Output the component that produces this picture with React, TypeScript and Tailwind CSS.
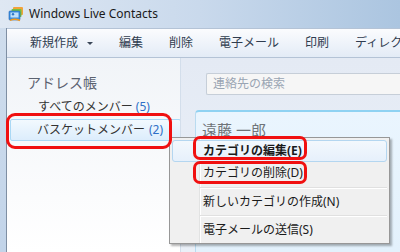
import React from "react";

function AppIcon() {
  return (
    <svg width="16" height="16" viewBox="0 0 16 16" className="shrink-0">
      <rect x="5" y="1" width="10" height="8" rx="1" fill="#f2a23a" />
      <rect x="3.5" y="3" width="10" height="8" rx="1" fill="#74c043" />
      <rect x="1" y="5" width="11" height="9" rx="1" fill="#3a8fe0" stroke="#2467b5" strokeWidth="0.6" />
      <rect x="2.5" y="6.5" width="8" height="5" fill="#bfe0fb" />
      <circle cx="5" cy="8.3" r="1.2" fill="#2d77c9" />
      <path d="M2 14.5 Q6.5 12 12 14.5" stroke="#f39a1e" strokeWidth="1.4" fill="none" />
    </svg>
  );
}

const toolbarItems = ["編集", "削除", "電子メール", "印刷", "ディレクトリ"];

export default function App() {
  return (
    <div className="relative h-[252px] w-[400px] overflow-hidden bg-[#c9d9ec] font-[family-name:'Noto_Sans','Noto_Sans_CJK_JP',sans-serif] text-[12px] leading-none">
      {/* title bar */}
      <div className="flex h-[28px] items-center gap-[5px] bg-gradient-to-r from-[#dfe8f3] via-[#c9d9ec] to-[#abc5e0] pl-[8px]">
        <AppIcon />
        <span className="text-[12px] text-[#1a1a1a]">Windows Live Contacts</span>
      </div>

      <div className="flex h-[224px]">
        <div className="w-[7px] shrink-0 border-r border-[#7f8fa3] bg-gradient-to-b from-[#cfdded] to-[#c2d4e9]" />

        <div className="flex min-w-0 flex-1 flex-col">
          {/* toolbar */}
          <div className="flex h-[30px] shrink-0 items-center gap-[26px] whitespace-nowrap border-y border-[#b4c3d6] bg-gradient-to-b from-[#fbfcfe] to-[#e3ebf6] pl-[23px] text-[12px] text-[#2f3c4f]">
            <div className="flex items-center gap-[9px]">
              <span>新規作成</span>
              <span className="h-0 w-0 border-x-[3px] border-t-[3px] border-x-transparent border-t-[#3a4658]" />
            </div>
            {toolbarItems.map((t) => (
              <span key={t}>{t}</span>
            ))}
          </div>

          <div className="flex min-h-0 flex-1">
            {/* left pane */}
            <div className="flex w-[173px] shrink-0 flex-col bg-gradient-to-b from-[#f1f4f8] to-white">
              <div className="pl-[20px] pt-[17px] text-[14px] leading-[16px] text-[#5b6270]">アドレス帳</div>
              <div className="mt-[9px] pl-[31px] leading-[14px] text-[#333]">
                すべてのメンバー <span className="text-[#2f6fc7]">(5)</span>
              </div>
              <div className="ml-[3px] mr-[-1px] mt-[5px] flex h-[22px] items-center rounded-[2px] border border-[#a9d8f5] bg-gradient-to-b from-[#f2f9fe] to-[#dcedfc] pl-[26px] text-[#333]">
                バスケットメンバー <span className="ml-[4px] text-[#2f6fc7]">(2)</span>
              </div>
            </div>

            {/* right area */}
            <div className="flex min-w-0 flex-1 flex-col border-l border-[#d3deeb] bg-gradient-to-b from-[#e4eaf4] to-[#eaf0f8]">
              <div className="ml-[25px] mt-[15px] flex h-[22px] items-center rounded-l-[2px] border border-r-0 border-[#c6ced8] bg-[#f6f6f6] pl-[6px] text-[#9aa5b3]">
                連絡先の検索
              </div>
              <div className="ml-[14px] mt-[15px] flex-1 rounded-tl-[4px] border-l border-t-2 border-l-[#b9dbf0] border-t-[#8fd2f2] bg-gradient-to-b from-[#eaf5fe] to-[#e3f1fc] pl-[6px] pt-[9px]">
                <div className="text-[15px] leading-[18px] text-[#6f7479]">遠藤 一郎</div>
              </div>
            </div>
          </div>
        </div>
      </div>

      {/* context menu */}
      <div className="absolute left-[169px] top-[137px] w-[221px] border border-[#979797] bg-[#f0f0f0] p-[2px] text-[12px] text-[#1a1a1a] shadow-[2px_2px_2px_rgba(0,0,0,0.3)]">
        <div className="absolute bottom-0 left-[29px] top-0 w-[2px] border-l border-[#e2e3e3] bg-white" />
        <div className="relative flex h-[22px] items-center rounded-[3px] border border-[#b4d6f0] bg-gradient-to-b from-[#f3f8fd] to-[#e6f0fb] pl-[30px] font-bold">
          カテゴリの編集(E)
        </div>
        <div className="relative flex h-[22px] items-center pl-[31px]">カテゴリの削除(D)</div>
        <div className="relative flex h-[7px] items-center pl-[28px]">
          <div className="h-[2px] w-full border-t border-[#e0e0e0] bg-white" />
        </div>
        <div className="relative flex h-[22px] items-center pl-[31px]">新しいカテゴリの作成(N)</div>
        <div className="relative flex h-[6px] items-center pl-[28px]">
          <div className="h-[2px] w-full border-t border-[#e0e0e0] bg-white" />
        </div>
        <div className="relative flex h-[22px] items-center pl-[31px]">電子メールの送信(S)</div>
      </div>

      {/* red annotation frames */}
      <div className="absolute left-[6px] top-[113px] h-[36px] w-[166px] rounded-[9px] border-[3px] border-[#f01010]" />
      <div className="absolute left-[193px] top-[136px] h-[24px] w-[114px] rounded-[7px] border-[3px] border-[#f01010]" />
      <div className="absolute left-[193px] top-[161px] h-[23px] w-[114px] rounded-[7px] border-[3px] border-[#f01010]" />
    </div>
  );
}
